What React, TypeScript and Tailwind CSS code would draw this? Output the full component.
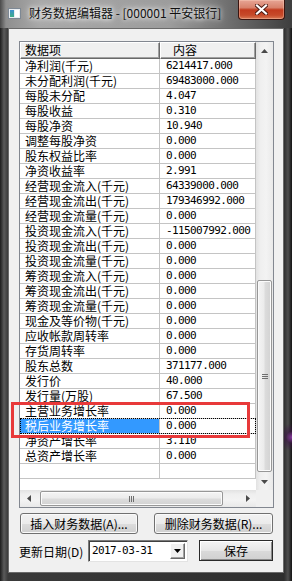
import React from 'react';

// 财务数据行（数据项, 内容）
const rows: [string, string][] = [
  ['净利润(千元)', '6214417.000'],
  ['未分配利润(千元)', '69483000.000'],
  ['每股未分配', '4.047'],
  ['每股收益', '0.310'],
  ['每股净资', '10.940'],
  ['调整每股净资', '0.000'],
  ['股东权益比率', '0.000'],
  ['净资收益率', '2.991'],
  ['经营现金流入(千元)', '64339000.000'],
  ['经营现金流出(千元)', '179346992.000'],
  ['经营现金流量(千元)', '0.000'],
  ['投资现金流入(千元)', '-115007992.000'],
  ['投资现金流出(千元)', '0.000'],
  ['投资现金流量(千元)', '0.000'],
  ['筹资现金流入(千元)', '0.000'],
  ['筹资现金流出(千元)', '0.000'],
  ['筹资现金流量(千元)', '0.000'],
  ['现金及等价物(千元)', '0.000'],
  ['应收帐款周转率', '0.000'],
  ['存货周转率', '0.000'],
  ['股东总数', '371177.000'],
  ['发行价', '40.000'],
  ['发行量(万股)', '67.500'],
  ['主营业务增长率', '0.000'],
  ['税后业务增长率', '0.000'],
  ['净资产增长率', '3.110'],
  ['总资产增长率', '0.000'],
];

const SELECTED = 24;

const AppIcon = () => (
  <svg width="13" height="11" viewBox="0 0 13 11">
    <defs>
      <linearGradient id="ic" x1="0" y1="0" x2="0" y2="1">
        <stop offset="0" stopColor="#3b8fd0" />
        <stop offset="1" stopColor="#3fae86" />
      </linearGradient>
    </defs>
    <rect x="0.5" y="0.5" width="12" height="10" fill="#e9edf1" stroke="#7d8894" />
    <rect x="2" y="2" width="4" height="7" fill="url(#ic)" />
    <rect x="7" y="2" width="4" height="7" fill="#ffffff" />
  </svg>
);

const CloseBtn = () => (
  <div className="mr-[7px] flex h-[20px] w-[47px] items-center justify-center rounded-b-[4px] border border-t-0 border-[#3b1510] bg-[linear-gradient(180deg,#e7a595_0%,#d8826c_40%,#c23b1e_52%,#c64a2a_80%,#d97a55_100%)] shadow-[inset_0_0_0_1px_rgba(255,220,200,0.35)]">
    <svg width="13" height="11" viewBox="0 0 13 11">
      <path d="M2 1.5 11 9.5M11 1.5 2 9.5" stroke="#4a1a12" strokeWidth="4" strokeLinecap="square" />
      <path d="M2 1.5 11 9.5M11 1.5 2 9.5" stroke="#ffffff" strokeWidth="2.2" strokeLinecap="square" />
    </svg>
  </div>
);

const Tri = ({ dir }: { dir: 'up' | 'down' | 'left' | 'right' }) => {
  const d = {
    up: 'M3.5 0 7 4H0z',
    down: 'M0 0h7L3.5 4z',
    left: 'M4 0v7L0 3.5z',
    right: 'M0 0v7l4-3.5z',
  }[dir];
  const w = dir === 'up' || dir === 'down' ? 7 : 4;
  const h = dir === 'up' || dir === 'down' ? 4 : 7;
  return (
    <svg width={w} height={h} viewBox={`0 0 ${w} ${h}`}>
      <path d={d} fill="#4a4a4a" />
    </svg>
  );
};

const thumbV =
  'rounded-[2px] border border-[#979797] bg-[linear-gradient(90deg,#f4f4f4,#ececec_45%,#dcdcdc_55%,#d2d2d2)] shadow-[inset_0_0_0_1px_#fbfbfb]';
const thumbH =
  'rounded-[2px] border border-[#979797] bg-[linear-gradient(180deg,#f4f4f4,#ececec_45%,#dcdcdc_55%,#d2d2d2)] shadow-[inset_0_0_0_1px_#fbfbfb]';

const btn =
  'flex items-center justify-center rounded-[3px] border border-[#707070] bg-[linear-gradient(180deg,#f2f2f2_0%,#ebebeb_50%,#dddddd_51%,#cfcfcf_100%)] shadow-[inset_0_0_0_1px_#fafafa]';

export default function App() {
  return (
    <div className="relative h-[581px] w-[292px] overflow-hidden bg-[#2a2a2a] font-['Noto_Sans_CJK_SC','Noto_Sans',sans-serif] text-[12px] text-black">
      {/* 标题栏 */}
      <div className="flex h-[28px] bg-[linear-gradient(90deg,#4a4a4a_0px,#8e8e8e_6px,#a8a8a8_40px,#9c9c9c_170px,#6a6a6a_235px,#3e3e3e_292px)]">
        <div className="ml-[8px] mt-[8px]">
          <AppIcon />
        </div>
        <div className="ml-[8px] mt-[5px] leading-[16px] text-[#111] [text-shadow:0_0_4px_#ffffff,0_0_8px_#ffffff]">
          财务数据编辑器 - [000001 平安银行]
        </div>
        <div className="flex-1" />
        <CloseBtn />
      </div>

      {/* 客户区 */}
      <div className="h-[553px] bg-[radial-gradient(circle_at_100%_74%,#8a3aa0_0px,rgba(60,20,70,0.6)_6px,transparent_14px),linear-gradient(90deg,#1c1c1c_0px,#5a5a5a_4px,#3a3a3a_8px,#2e2e2e_284px,#4e4e4e_288px,#141414_292px)] px-[8px] pb-[8px]">
        <div className="flex h-[545px] flex-col border border-[#6a6a6a] bg-[#f0f0f0] pl-[10px] pr-[9px] pt-[12px]">
          {/* 列表 */}
          <div className="flex h-[467px] flex-col border border-[#828790] bg-white">
            <div className="flex flex-1">
              <div className="flex w-[236px] flex-col">
                {/* 表头 */}
                <div className="flex h-[17px] bg-[#f0f0f0]">
                  <div className="w-[140px] border border-b-[#696969] border-l-white border-r-[#696969] border-t-white pl-[4px] leading-[14px] shadow-[inset_-1px_-1px_0_#a0a0a0]">
                    数据项
                  </div>
                  <div className="w-[96px] border border-b-[#696969] border-l-white border-r-[#696969] border-t-white pl-[12px] leading-[14px] shadow-[inset_-1px_-1px_0_#a0a0a0]">
                    内容
                  </div>
                </div>
                {rows.map(([label, value], i) => {
                  const sel = i === SELECTED;
                  return (
                    <div key={label} className="relative flex h-[15px] border-b border-[#c4c4c4]">
                      <div
                        className={`w-[140px] border-r border-[#c4c4c4] pl-[5px] leading-[14px] whitespace-nowrap ${
                          sel ? 'bg-[#3399ff] text-white' : ''
                        }`}
                      >
                        {label}
                      </div>
                      <div className="w-[96px] border-r border-[#c4c4c4] pl-[6px] font-['DejaVu_Sans_Mono',monospace] text-[11px] leading-[14px] tracking-[-0.6px] whitespace-nowrap">
                        {value}
                      </div>
                      {sel && (
                        <div className="absolute -top-[1px] bottom-[-1px] left-0 right-0 border border-dotted border-black" />
                      )}
                    </div>
                  );
                })}
                <div className="flex h-[15px] border-b border-[#c4c4c4]">
                  <div className="w-[140px] border-r border-[#c4c4c4]" />
                  <div className="w-[96px] border-r border-[#c4c4c4]" />
                </div>
              </div>

              {/* 竖向滚动条 */}
              <div className="flex w-[17px] flex-col bg-[linear-gradient(90deg,#e2e2e2,#efefef_25%,#f3f3f3_60%,#e9e9e9)]">
                <div className="flex h-[17px] items-center justify-center">
                  <Tri dir="up" />
                </div>
                <div className="flex flex-1 flex-col justify-end px-[1px] pb-[1px]">
                  <div className={`flex h-[192px] flex-col items-center justify-center gap-[1px] ${thumbV}`}>
                    <div className="h-[1px] w-[6px] bg-[#6e6e6e]" />
                    <div className="h-[1px] w-[6px] bg-[#6e6e6e]" />
                    <div className="h-[1px] w-[6px] bg-[#6e6e6e]" />
                  </div>
                </div>
                <div className="flex h-[17px] items-center justify-center">
                  <Tri dir="down" />
                </div>
              </div>
            </div>

            {/* 横向滚动条 */}
            <div className="flex h-[17px]">
              <div className="flex w-[236px] bg-[linear-gradient(180deg,#e2e2e2,#efefef_25%,#f3f3f3_60%,#e9e9e9)]">
                <div className="flex w-[17px] items-center justify-center">
                  <Tri dir="left" />
                </div>
                <div className="flex flex-1 items-stretch py-[1px] pl-[3px] pr-[16px]">
                  <div className={`flex w-[183px] items-center justify-center gap-[1px] ${thumbH}`}>
                    <div className="h-[6px] w-[1px] bg-[#6e6e6e]" />
                    <div className="h-[6px] w-[1px] bg-[#6e6e6e]" />
                    <div className="h-[6px] w-[1px] bg-[#6e6e6e]" />
                  </div>
                </div>
                <div className="flex w-[17px] items-center justify-center">
                  <Tri dir="right" />
                </div>
              </div>
              <div className="w-[17px] bg-[#f0f0f0]" />
            </div>
          </div>

          {/* 按钮行 */}
          <div className="mt-[5px] flex h-[21px] justify-between px-[1px]">
            <div className={`w-[118px] ${btn}`}>插入财务数据(A)...</div>
            <div className={`w-[119px] ${btn}`}>删除财务数据(R)...</div>
          </div>

          {/* 日期行 */}
          <div className="mt-[6px] flex h-[22px] items-start">
            <div className="mt-[4px] w-[69px] leading-[16px] whitespace-nowrap">更新日期(D)</div>
            <div className="flex h-[22px] w-[100px] items-center border border-b-[#e3e3e3] border-l-[#7a7a7a] border-r-[#e3e3e3] border-t-[#7a7a7a] bg-white shadow-[inset_1px_1px_0_#404040]">
              <div className="flex-1 pl-[3px] font-['DejaVu_Sans_Mono',monospace] text-[11px] leading-[14px] tracking-[-0.6px]">
                2017-03-31
              </div>
              <div className="mr-[2px] flex h-[16px] w-[15px] items-center justify-center border border-b-[#696969] border-l-white border-r-[#696969] border-t-white bg-[#f0f0f0] shadow-[inset_-1px_-1px_0_#a0a0a0]">
                <svg width="7" height="4" viewBox="0 0 7 4">
                  <path d="M0 0h7L3.5 4z" fill="#000" />
                </svg>
              </div>
            </div>
            <div className="ml-[11px] flex h-[21px] w-[74px] items-center justify-center border border-[#2a2a2a] bg-[linear-gradient(180deg,#f4f4f4,#e6e6e6_50%,#dadada_51%,#d0d0d0)] shadow-[inset_1px_1px_0_#ffffff,inset_-1px_-1px_0_#8a8a8a]">
              保存
            </div>
          </div>
        </div>
      </div>

      {/* 红色标注框 */}
      <div className="pointer-events-none absolute left-[11px] top-[402px] h-[36px] w-[239px] border-[3px] border-[#e8393a]" />
    </div>
  );
}
